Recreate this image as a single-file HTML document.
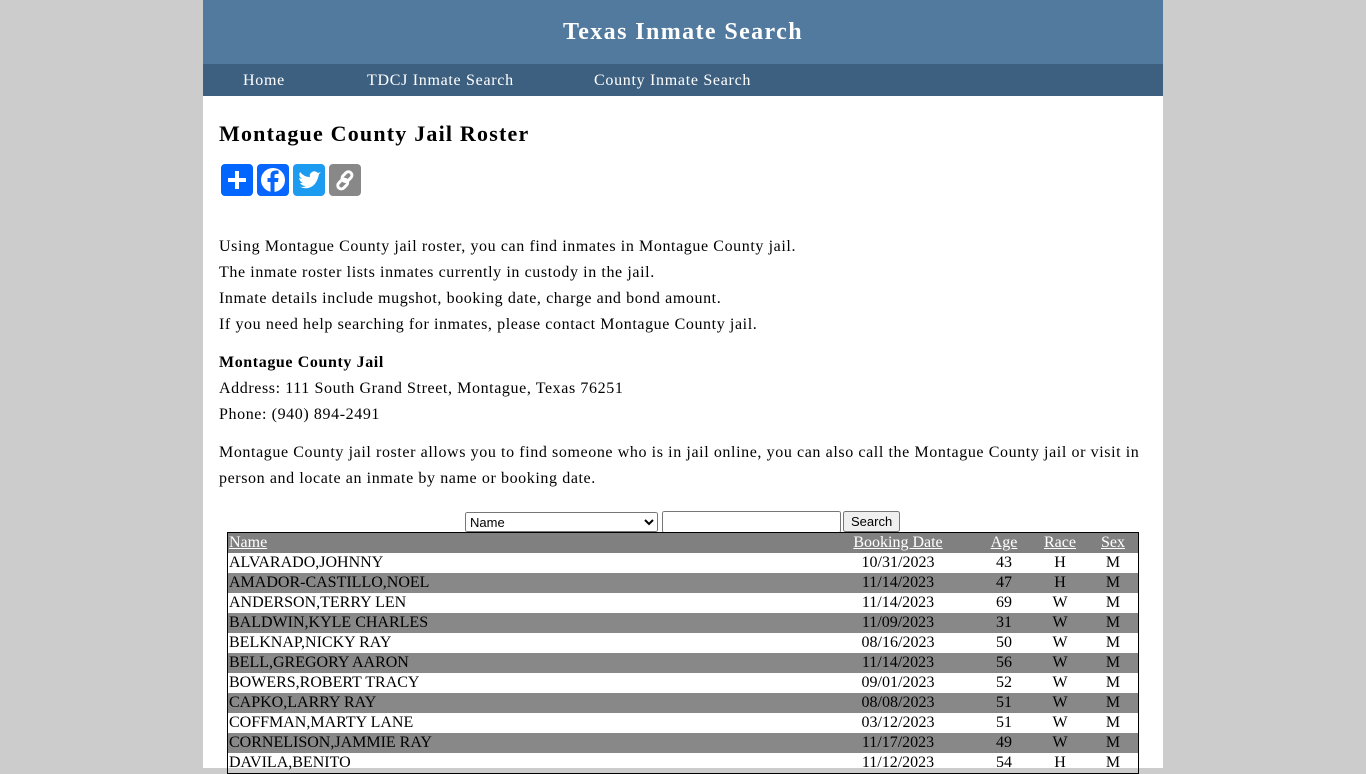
<!DOCTYPE html>
<html><head><meta charset="utf-8"><style>
html,body{margin:0;height:768px;overflow:hidden;}
body{background:#ccc;font-family:"Liberation Serif",serif;}
#w{width:960px;margin:0 auto;background:#fff;height:768px;overflow:hidden;}
#hd{background:#527a9e;height:64px;color:#fff;text-align:center;font-weight:bold;font-size:24px;line-height:64px;letter-spacing:1.4px;}
#nav{background:#3d6080;height:32px;line-height:32px;font-size:16px;color:#fff;letter-spacing:0.7px;}
#nav span{position:absolute;top:65px;}
h1{font-size:22px;margin:0;position:absolute;top:121px;left:219px;letter-spacing:1.2px;}
.sh{position:absolute;top:164px;width:32px;height:32px;border-radius:4px;}
p{font-size:16px;line-height:26px;margin:0;letter-spacing:0.6px;}
table{border-collapse:collapse;border:1px solid #000;width:912px;font-size:16px;position:absolute;top:532px;left:227px;}
td{padding:0 1px;height:20px;line-height:20px;white-space:nowrap;}
tr.g{background:#888;}
th{background:#808080;color:#fff;font-weight:normal;text-decoration:underline;height:20px;padding:0 1px;}
.c{text-align:center;}
</style></head><body><div id="w">
<div id="hd">Texas Inmate Search</div>
<div id="nav"><span style="left:243px">Home</span><span style="left:367px">TDCJ Inmate Search</span><span style="left:594px">County Inmate Search</span></div>
<h1>Montague County Jail Roster</h1>
<div class="sh" style="left:221px;background:#0166ff"><svg width="32" height="32"><path d="M16 7v18M7 16h18" stroke="#fff" stroke-width="4"/></svg></div>
<div class="sh" style="left:257px;background:#0866ff"><svg width="32" height="32"><circle cx="16" cy="16" r="12" fill="#fff"/><path d="M17.5 29V18h3.5l.5-4h-4v-2.5q0-1.5 1.7-1.5h2.3V6.5h-3q-5 0-5 5V14h-3v4h3v11z" fill="#0866ff"/></svg></div>
<div class="sh" style="left:293px;background:#1d9bf0"><svg width="32" height="32"><path d="M6 22q6 4 12 1t8-13l2-2-3 1q-3-3-6-1t-2 5q-6 0-10-5-2 4 2 7l-3-1q1 4 4 5h-3q2 3 6 3q-4 2-7 0z" fill="#fff"/></svg></div>
<div class="sh" style="left:329px;background:#888"><svg width="32" height="32"><g fill="none" stroke="#fff" stroke-width="3"><rect x="15" y="7" width="7" height="11" rx="3.5" transform="rotate(45 18 12)"/><rect x="10" y="14" width="7" height="11" rx="3.5" transform="rotate(45 13 20)"/></g></svg></div>
<div style="position:absolute;top:234px;left:219px;width:922px">
<p>Using Montague County jail roster, you can find inmates in Montague County jail.<br>The inmate roster lists inmates currently in custody in the jail.<br>Inmate details include mugshot, booking date, charge and bond amount.<br>If you need help searching for inmates, please contact Montague County jail.</p>
<p style="margin-top:12px"><b>Montague County Jail</b><br>Address: 111 South Grand Street, Montague, Texas 76251<br>Phone: (940) 894-2491</p>
<p style="margin-top:12px">Montague County jail roster allows you to find someone who is in jail online, you can also call the Montague County jail or visit in person and locate an inmate by name or booking date.</p>
</div>
<select style="position:absolute;left:465px;top:512px;width:193px;height:20px;font-size:13px">
<option>Name</option></select>
<input style="position:absolute;left:662px;top:511px;width:171px;height:16px">
<button style="position:absolute;left:843px;top:511px;height:21px;font-size:13px;font-family:'Liberation Sans',sans-serif">Search</button>
<table>
<tr><th style="text-align:left">Name</th><th style="width:154px">Booking Date</th><th style="width:54px">Age</th><th style="width:54px">Race</th><th style="width:48px">Sex</th></tr>
<tr><td>ALVARADO,JOHNNY</td><td class="c">10/31/2023</td><td class="c">43</td><td class="c">H</td><td class="c">M</td></tr>
<tr class="g"><td>AMADOR-CASTILLO,NOEL</td><td class="c">11/14/2023</td><td class="c">47</td><td class="c">H</td><td class="c">M</td></tr>
<tr><td>ANDERSON,TERRY LEN</td><td class="c">11/14/2023</td><td class="c">69</td><td class="c">W</td><td class="c">M</td></tr>
<tr class="g"><td>BALDWIN,KYLE CHARLES</td><td class="c">11/09/2023</td><td class="c">31</td><td class="c">W</td><td class="c">M</td></tr>
<tr><td>BELKNAP,NICKY RAY</td><td class="c">08/16/2023</td><td class="c">50</td><td class="c">W</td><td class="c">M</td></tr>
<tr class="g"><td>BELL,GREGORY AARON</td><td class="c">11/14/2023</td><td class="c">56</td><td class="c">W</td><td class="c">M</td></tr>
<tr><td>BOWERS,ROBERT TRACY</td><td class="c">09/01/2023</td><td class="c">52</td><td class="c">W</td><td class="c">M</td></tr>
<tr class="g"><td>CAPKO,LARRY RAY</td><td class="c">08/08/2023</td><td class="c">51</td><td class="c">W</td><td class="c">M</td></tr>
<tr><td>COFFMAN,MARTY LANE</td><td class="c">03/12/2023</td><td class="c">51</td><td class="c">W</td><td class="c">M</td></tr>
<tr class="g"><td>CORNELISON,JAMMIE RAY</td><td class="c">11/17/2023</td><td class="c">49</td><td class="c">W</td><td class="c">M</td></tr>
<tr><td>DAVILA,BENITO</td><td class="c">11/12/2023</td><td class="c">54</td><td class="c">H</td><td class="c">M</td></tr>
</table>
</div></body></html>
